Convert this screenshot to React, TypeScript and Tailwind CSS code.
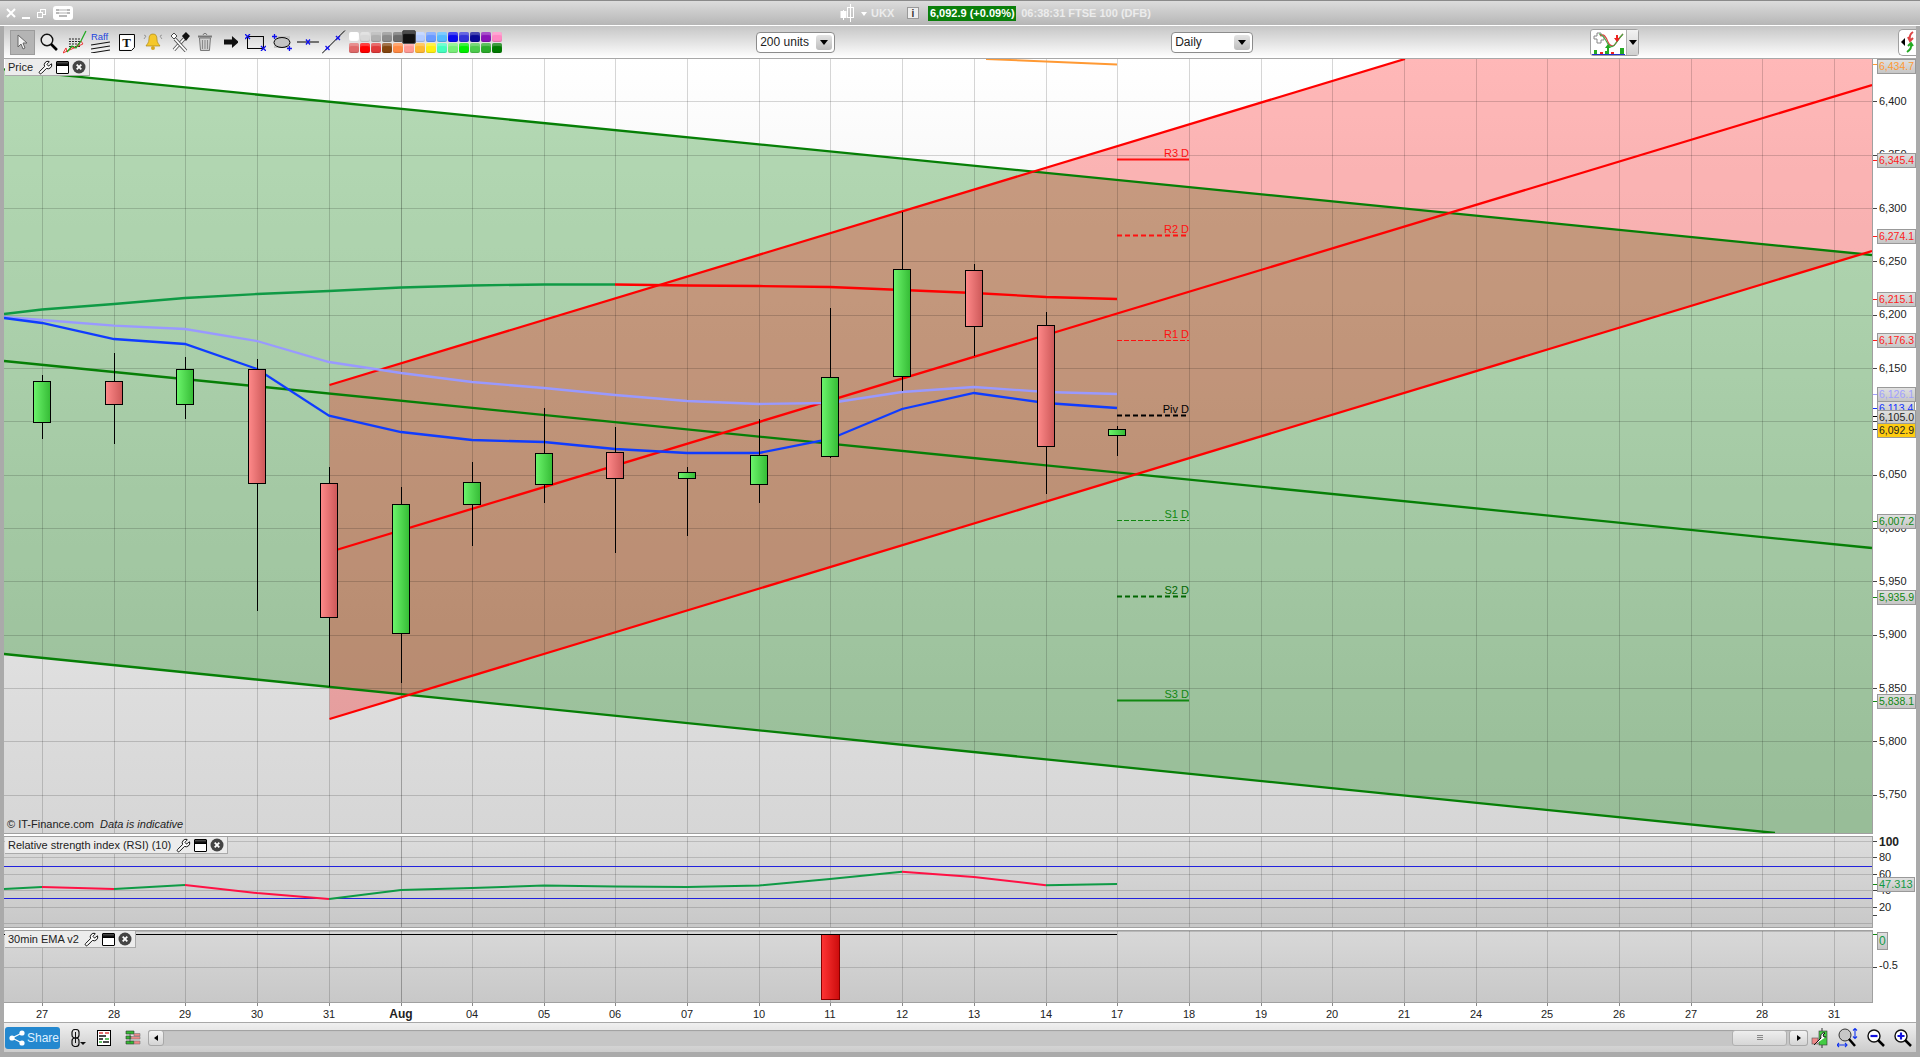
import React from "react";
import { Wrench } from "lucide-react";

// x of every day column, page coordinates
const gridX = [42, 114, 185, 257, 329, 401, 472, 544, 615, 687, 759, 830, 902, 974, 1046, 1117, 1189, 1261, 1332, 1404, 1476, 1547, 1619, 1691, 1762, 1834];
const days = ["27", "28", "29", "30", "31", "Aug", "04", "05", "06", "07", "10", "11", "12", "13", "14", "17", "18", "19", "20", "21", "24", "25", "26", "27", "28", "31"];
const priceY = (p: number) => 315.3 + (6200 - p) * 1.0667;
const gridPrices = [6400, 6350, 6300, 6250, 6200, 6150, 6100, 6050, 6000, 5950, 5900, 5850, 5800, 5750];

type Candle = { x: number; hi: number; top: number; bot: number; lo: number; up: boolean };
const candles: Candle[] = [
  { x: 42, hi: 375, top: 381, bot: 422, lo: 439, up: true },
  { x: 114, hi: 353, top: 381, bot: 404, lo: 444, up: false },
  { x: 185, hi: 357, top: 369, bot: 404, lo: 419, up: true },
  { x: 257, hi: 359, top: 369, bot: 483, lo: 611, up: false },
  { x: 329, hi: 467, top: 483, bot: 617, lo: 687, up: false },
  { x: 401, hi: 487, top: 504, bot: 633, lo: 683, up: true },
  { x: 472, hi: 462, top: 482, bot: 504, lo: 546, up: true },
  { x: 544, hi: 408, top: 453, bot: 484, lo: 503, up: true },
  { x: 615, hi: 427, top: 452, bot: 478, lo: 553, up: false },
  { x: 687, hi: 467, top: 472, bot: 478, lo: 536, up: true },
  { x: 759, hi: 419, top: 455, bot: 484, lo: 503, up: true },
  { x: 830, hi: 308, top: 377, bot: 456, lo: 458, up: true },
  { x: 902, hi: 212, top: 269, bot: 376, lo: 391, up: true },
  { x: 974, hi: 264, top: 270, bot: 326, lo: 356, up: false },
  { x: 1046, hi: 312, top: 325, bot: 446, lo: 494, up: false },
  { x: 1117, hi: 426, top: 429, bot: 435, lo: 456, up: true },
];

const pivots = [
  { y: 159.5, label: "R3 D", color: "#ff1111", width: 2, dash: "" },
  { y: 235.5, label: "R2 D", color: "#ff1111", width: 2, dash: "5 3" },
  { y: 340.5, label: "R1 D", color: "#ff1111", width: 1, dash: "5 2" },
  { y: 415.5, label: "Piv D", color: "#000000", width: 2, dash: "5 3" },
  { y: 520.5, label: "S1 D", color: "#118811", width: 1, dash: "5 2" },
  { y: 596.5, label: "S2 D", color: "#006600", width: 2, dash: "5 3" },
  { y: 700.5, label: "S3 D", color: "#118811", width: 2, dash: "" },
];

const badges = [
  { top: 59, tick: 64, text: "6,434.7", cls: "text-[#ff9933]", tc: "bg-[#ff9933]" },
  { top: 153, tick: 160, text: "6,345.4", cls: "text-[#ff1a1a]", tc: "bg-[#ff1a1a]" },
  { top: 229, tick: 236, text: "6,274.1", cls: "text-[#ff1a1a]", tc: "bg-[#ff1a1a]" },
  { top: 292, tick: 299, text: "6,215.1", cls: "text-[#ff1a1a]", tc: "bg-[#ff1a1a]" },
  { top: 333, tick: 340, text: "6,176.3", cls: "text-[#ff1a1a]", tc: "bg-[#ff1a1a]" },
  { top: 387, tick: 394, text: "6,126.1", cls: "text-[#a0a0ff]", tc: "bg-[#a0a0ff]" },
  { top: 401, tick: 408, text: "6,113.4", cls: "text-[#1133ff]", tc: "bg-[#1133ff]" },
  { top: 410, tick: 416, text: "6,105.0", cls: "text-[#222222]", tc: "bg-black" },
  { top: 423, tick: 429, text: "6,092.9", cls: "text-[#222222] !bg-none !bg-[#ffcc11]", tc: "bg-black" },
  { top: 514, tick: 521, text: "6,007.2", cls: "text-[#118811]", tc: "bg-[#118811]" },
  { top: 590, tick: 597, text: "5,935.9", cls: "text-[#118811]", tc: "bg-[#118811]" },
  { top: 694, tick: 701, text: "5,838.1", cls: "text-[#118811]", tc: "bg-[#118811]" },
];

const swatches = [
  "bg-[#ffffff]", "bg-[#d8d8d8]", "bg-[#b0b0b0]", "bg-[#8c8c8c]", "bg-[#6c6c6c]", "bg-[#111111]", "bg-[#b4ccff]", "bg-[#6a9aff]", "bg-[#55bbff]", "bg-[#0a0aee]", "bg-[#3434d8]", "bg-[#0a0a96]", "bg-[#8a14b8]", "bg-[#ff88c4]",
  "bg-[#e06a6a]", "bg-[#ff0000]", "bg-[#e03a3a]", "bg-[#84450f]", "bg-[#ff8a44]", "bg-[#ff9a94]", "bg-[#ffb833]", "bg-[#ffee11]", "bg-[#44ffc0]", "bg-[#78ee78]", "bg-[#00ee00]", "bg-[#4ccc4c]", "bg-[#2aaa2a]", "bg-[#007a00]",
];

const pts = (a: number[][]) => a.map((p) => p.join(",")).join(" ");

const Gradients = () => (
  <defs>
    <linearGradient id="up">
      <stop offset="0" stopColor="#6cf56c" />
      <stop offset="1" stopColor="#35bb35" />
    </linearGradient>
    <linearGradient id="down">
      <stop offset="0" stopColor="#ff8a8a" />
      <stop offset="1" stopColor="#cc5858" />
    </linearGradient>
    <linearGradient id="bar">
      <stop offset="0" stopColor="#ff3434" />
      <stop offset="1" stopColor="#cc0c0c" />
    </linearGradient>
  </defs>
);

const VGrid = ({ y1, y2 }: { y1: number; y2: number }) => (
  <>
    {gridX.map((x, i) => (
      <line key={i} x1={x + 0.5} x2={x + 0.5} y1={y1} y2={y2} stroke="#000" strokeOpacity={x === 401 ? 0.28 : 0.16} />
    ))}
  </>
);

const PriceChart = () => (
  <svg className="block" width={1868} height={774} viewBox="4 59 1868 774">
    <Gradients />
    <polygon points="4,69.4 1872,255 1872,833 1775,833 4,654" fill="#008000" fillOpacity={0.29} />
    <polygon points="329.5,385 1405,59 1872,59 1872,251 329.5,719" fill="#ff0000" fillOpacity={0.28} />
    <VGrid y1={59} y2={833} />
    {gridPrices.map((p) => (
      <line key={p} x1={4} x2={1872} y1={Math.floor(priceY(p)) + 0.5} y2={Math.floor(priceY(p)) + 0.5} stroke="#000" strokeOpacity={0.16} />
    ))}
    <polyline points="986,59 1117,64.5" fill="none" stroke="#ff9933" strokeWidth={2} />
    <g fill="none" strokeWidth={2.3}>
      <line x1={4} y1={69.4} x2={1872} y2={255} stroke="#067f06" />
      <line x1={4} y1={361} x2={1872} y2={548} stroke="#067f06" />
      <line x1={4} y1={654} x2={1775} y2={833} stroke="#067f06" />
      <line x1={329.5} y1={385} x2={1405} y2={59} stroke="#ff0000" />
      <line x1={329.5} y1={552} x2={1872} y2={85} stroke="#ff0000" />
      <line x1={329.5} y1={719} x2={1872} y2={251} stroke="#ff0000" />
      <polyline stroke="#0f9a45" points={pts([[4, 314], [42, 309.5], [114, 304], [185, 298], [257, 294], [329, 291], [401, 287.5], [472, 285.5], [544, 284.5], [615, 284.5]])} />
      <polyline stroke="#ff0000" points={pts([[615, 284.5], [687, 285.5], [759, 286], [830, 287], [902, 290], [974, 293], [1046, 297], [1117, 299]])} />
      <polyline stroke="#9999ff" points={pts([[4, 317], [42, 320], [114, 325.7], [185, 329], [257, 341], [329, 362], [401, 373], [472, 382], [544, 388], [615, 395], [687, 401], [759, 404], [830, 403], [902, 392], [974, 387], [1046, 392], [1117, 394]])} />
      <polyline stroke="#0f3cff" points={pts([[4, 318], [42, 323], [114, 339], [185, 344], [257, 369], [329, 415.7], [401, 432], [472, 440], [544, 442], [615, 449], [687, 453], [759, 453], [830, 439], [902, 409], [974, 393], [1046, 403], [1117, 408]])} />
    </g>
    {candles.map((c) => (
      <g key={c.x} stroke="#000">
        <line x1={c.x + 0.5} x2={c.x + 0.5} y1={c.hi} y2={c.lo} />
        <rect x={c.x - 8.5} y={c.top + 0.5} width={17} height={c.bot - c.top} fill={c.up ? "url(#up)" : "url(#down)"} />
      </g>
    ))}
    {pivots.map((p) => (
      <g key={p.label}>
        <line x1={1117} x2={1189} y1={p.y} y2={p.y} stroke={p.color} strokeWidth={p.width} strokeDasharray={p.dash} />
        <text x={1189} y={p.y - 3} textAnchor="end" fontSize={11} fill={p.color}>
          {p.label}
        </text>
      </g>
    ))}
  </svg>
);

const rsi: { c: string; p: number[][] }[] = [
  { c: "#0f9a45", p: [[4, 889], [42, 887]] },
  { c: "#ff1144", p: [[42, 887], [114, 889]] },
  { c: "#0f9a45", p: [[114, 889], [185, 885]] },
  { c: "#ff1144", p: [[185, 885], [257, 893], [329, 899]] },
  { c: "#0f9a45", p: [[329, 899], [401, 890], [472, 888], [544, 885.5], [615, 886.5], [687, 887], [759, 885.5], [830, 879], [902, 871.7]] },
  { c: "#ff1144", p: [[902, 871.7], [974, 877], [1046, 885.3]] },
  { c: "#0f9a45", p: [[1046, 885.3], [1117, 884]] },
];

const RsiChart = () => (
  <svg className="block" width={1868} height={90} viewBox="4 837 1868 90">
    <VGrid y1={837} y2={927} />
    {[841.5, 857.5, 874.5, 890.5, 907.5, 923.5].map((y) => (
      <line key={y} x1={4} x2={1872} y1={y} y2={y} stroke="#000" strokeOpacity={0.15} />
    ))}
    <line x1={4} x2={1872} y1={866.5} y2={866.5} stroke="#2222dd" />
    <line x1={4} x2={1872} y1={898.5} y2={898.5} stroke="#2222dd" />
    {rsi.map((s, i) => (
      <polyline key={i} points={pts(s.p)} fill="none" stroke={s.c} strokeWidth={2} />
    ))}
  </svg>
);

const EmaChart = () => (
  <svg className="block" width={1868} height={71} viewBox="4 931 1868 71">
    <Gradients />
    <VGrid y1={931} y2={1002} />
    <line x1={4} x2={1872} y1={931.5} y2={931.5} stroke="#000" strokeOpacity={0.15} />
    <line x1={4} x2={1872} y1={967.5} y2={967.5} stroke="#000" strokeOpacity={0.15} />
    <rect x={821.5} y={934.5} width={18} height={65} fill="url(#bar)" stroke="#880000" />
    <line x1={4} x2={1117} y1={934.5} y2={934.5} stroke="#000" />
  </svg>
);

const WinIcon = () => (
  <span className="block h-[13px] w-[13px] rounded-[1px] border border-black bg-white">
    <span className="block h-[4px] bg-linear-to-b from-[#555555] to-black" />
  </span>
);

const CloseIcon = () => (
  <svg width={14} height={14} viewBox="0 0 14 14">
    <circle cx={7} cy={7} r={6.5} fill="#444" />
    <path d="M4.7 4.7l4.6 4.6M9.3 4.7l-4.6 4.6" stroke="#fff" strokeWidth={1.8} />
  </svg>
);

const Chip = ({ label, className }: { label: string; className: string }) => (
  <div className={`absolute left-px flex h-[17px] items-center gap-[3px] border-r border-b border-[#aaaaaa] bg-[#ececec] pr-[3px] pl-[3px] text-[11px] text-[#222222] ${className}`}>
    <span className="mr-[2px] whitespace-nowrap">{label}</span>
    <Wrench size={15} fill="#fff" stroke="#000" strokeWidth={1.5} />
    <WinIcon />
    <CloseIcon />
  </div>
);

const AxisTick = ({ top, className = "bg-[#444444]" }: { top: number; className?: string }) => (
  <span className={`absolute left-0 h-px w-[4px] ${className}`} style={{ top }} />
);

const AxisLabel = ({ top, text, bold }: { top: number; text: string; bold?: boolean }) => (
  <span className={`absolute left-[6px] leading-[14px] text-[#222222] ${bold ? "text-[12px] font-bold" : "text-[11px]"}`} style={{ top: bold ? top - 7 : top - 8 }}>
    {text}
  </span>
);

const Badge = ({ top, text, className }: { top: number; text: string; className: string }) => (
  <span className={`absolute left-[4px] h-[15px] border border-[#999999] bg-linear-to-b from-[#e0e0e0] to-[#c6c6c6] px-[1px] text-[10.5px] leading-[13px] whitespace-nowrap ${className}`} style={{ top }}>
    {text}
  </span>
);

const Caret = () => <span className="block h-0 w-0 border-x-[4px] border-t-[5px] border-x-transparent border-t-black" />;

const Select = ({ label, width }: { label: string; width: string }) => (
  <div className={`flex h-[21px] items-center justify-between rounded-[4px] border border-[#8c8c8c] bg-white pr-[2px] pl-[3px] text-[12px] text-[#222222] ${width}`}>
    <span>{label}</span>
    <span className="flex h-[15px] w-[16px] items-center justify-center rounded-[3px] bg-linear-to-b from-[#e4e4e4] to-[#bdbdbd]">
      <Caret />
    </span>
  </div>
);

const TitleBar = () => (
  <div className="flex h-[26px] shrink-0 items-center border-t border-b border-t-[#8a8a8a] border-b-white bg-linear-to-b from-[#dcdcdc] to-[#b6b6b6]">
    <svg className="ml-[6px]" width={10} height={10} viewBox="0 0 10 10">
      <path d="M1 1l8 8M9 1l-8 8" stroke="#fff" strokeWidth={2} />
    </svg>
    <span className="mt-[9px] ml-[6px] h-[2px] w-[8px] bg-white" />
    <svg className="ml-[7px]" width={9} height={9} viewBox="0 0 9 9" fill="none" stroke="#fff">
      <rect x={3.5} y={0.5} width={5} height={5} />
      <rect x={0.5} y={3.5} width={5} height={5} fill="#c8c8c8" />
    </svg>
    <span className="ml-[7px] flex h-[14px] w-[20px] flex-col items-center justify-center gap-[1px] rounded-[3px] bg-white">
      <span className="h-[2px] w-[14px] border-x-[3px] border-[#b8b8b8] bg-[#d8d8d8]" />
      <span className="h-[2px] w-[14px] border-x-[3px] border-[#b8b8b8] bg-[#d8d8d8]" />
      <span className="h-[2px] w-[8px] bg-[#b8b8b8]" />
    </span>
    <svg className="ml-[767px]" width={14} height={18} viewBox="0 0 14 18">
      <path d="M3.5 6v10M10.5 0v18" stroke="#fff" />
      <rect x={0.5} y={7} width={6} height={7} fill="#fff" />
      <rect x={7.5} y={3.5} width={6} height={10} fill="none" stroke="#fff" />
    </svg>
    <span className="mt-[1px] ml-[7px] block h-0 w-0 border-x-[3.5px] border-t-[4px] border-x-transparent border-t-white" />
    <span className="ml-[4px] text-[11px] font-bold text-[#ececec]">UKX</span>
    <svg className="ml-[13px]" width={12} height={12} viewBox="0 0 12 12">
      <rect x={0.5} y={0.5} width={11} height={11} fill="#eeeeee" stroke="#999" />
      <text x={6} y={10} textAnchor="middle" fontSize={10} fontWeight={700} fill="#333">i</text>
    </svg>
    <span className="ml-[9px] flex h-[15px] w-[88px] items-center justify-center bg-[#0a7f0a] text-[11px] font-bold whitespace-nowrap text-white">6,092.9 (+0.09%)</span>
    <span className="ml-[5px] text-[11px] font-bold text-[#ececec]">06:38:31 FTSE 100 (DFB)</span>
  </div>
);

const ToolIcons = () => (
  <>
    <span className="ml-[6px] flex h-[25px] w-[25px] items-center justify-center border border-[#9c9c9c] bg-[#b4b4b4]">
      <svg width={11} height={16} viewBox="0 0 11 16">
        <path d="M1 1v12l3-3 2 5 2-1-2-5h4z" fill="#f4f4f4" stroke="#666" />
      </svg>
    </span>
    <svg className="ml-[5px]" width={18} height={18} viewBox="0 0 18 18">
      <circle cx={7} cy={7} r={5.8} fill="#e8e8e8" stroke="#111" strokeWidth={1.4} />
      <path d="M11 11l6 6" stroke="#000" strokeWidth={2.6} />
    </svg>
    <svg className="ml-[5px]" width={24} height={24} viewBox="0 0 24 24">
      <path d="M6 9h12M6 11.5h12M6 14h12M6 16.5h12" stroke="#222" strokeDasharray="2 1" />
      <path d="M0 23l3-5 1 4 5-5 3 1 6-7 2 3z" fill="none" stroke="#ee2222" strokeWidth={0.9} />
      <path d="M4 22l5-6 4 2 5-7 5-10" fill="none" stroke="#22aa22" strokeWidth={1.3} />
    </svg>
    <svg className="ml-[4px]" width={20} height={22} viewBox="0 0 20 22">
      <text x={0} y={9} fontSize={9.5} fill="#2244dd">Raff</text>
      <path d="M0 14l19-3M0 18l19-3M0 22l19-3" stroke="#111" strokeWidth={1.1} />
    </svg>
    <svg className="ml-[8px]" width={16} height={17} viewBox="0 0 16 17">
      <path d="M.5.5h15v13l-3 3H.5z" fill="#fff" stroke="#000" />
      <text x={7.5} y={13} textAnchor="middle" fontSize={13} fontWeight={700} fontFamily="Liberation Serif, serif" fill="#111">T</text>
    </svg>
    <svg className="ml-[8px]" width={20} height={18} viewBox="0 0 20 18">
      <path d="M10 1c3 0 4 2 4 5 0 4 2 5 3 7H3c1-2 3-3 3-7 0-3 1-5 4-5z" fill="#f5c82c" stroke="#a8861a" strokeWidth={0.7} />
      <circle cx={10} cy={15} r={2} fill="#d8a820" />
      <path d="M3 3L1 6M17 3l2 3M1 2l2 1M19 2l-2 1" stroke="#999" />
    </svg>
    <svg className="ml-[7px]" width={20} height={20} viewBox="0 0 20 20">
      <path d="M4 18L14 7" stroke="#555" strokeWidth={3.4} />
      <path d="M4 18L14 7" stroke="#fff" strokeWidth={1.8} />
      <path d="M16 19L5 7" stroke="#555" strokeWidth={3.4} />
      <path d="M16 19L5 7" stroke="#fff" strokeWidth={1.8} />
      <path d="M1 4l3-3 3 3-3 3z" fill="#fff" stroke="#444" />
      <path d="M12 4l4-4 4 4-4 5z" fill="#111" />
    </svg>
    <svg className="ml-[7px]" width={16} height={18} viewBox="0 0 16 18">
      <path d="M1 3.5h14" stroke="#777" strokeWidth={2} />
      <path d="M6 2l1-1.5h2L10 2" fill="none" stroke="#777" />
      <path d="M2.5 5h11l-1 12.5h-9z" fill="#cfcfcf" stroke="#777" />
      <path d="M5.5 7v9M8 7v9M10.5 7v9" stroke="#888" />
    </svg>
    <svg className="ml-[11px]" width={15} height={12} viewBox="0 0 15 12">
      <path d="M0 3.5h8V0l7 6-7 6V8.5H0z" fill="#111" />
    </svg>
    <svg className="ml-[7px]" width={21} height={17} viewBox="0 0 21 17">
      <rect x={2.5} y={2.5} width={16} height={12} fill="none" stroke="#000" />
      <path d="M0 0l5 5M5 0L0 5M16 12l5 5M21 12l-5 5" stroke="#1111ee" strokeWidth={1.3} />
    </svg>
    <svg className="ml-[6px]" width={20} height={17} viewBox="0 0 20 17">
      <rect x={2} y={2} width={16} height={12} fill="#c4c4c4" />
      <ellipse cx={10} cy={8.5} rx={8} ry={5} fill="none" stroke="#000" />
      <path d="M2.5 0v5M0 2.5h5M17.5 12v5M15 14.5h5" stroke="#1111ee" strokeWidth={1.3} />
    </svg>
    <svg className="ml-[5px]" width={22} height={8} viewBox="0 0 22 8">
      <path d="M0 4h22" stroke="#000" />
      <path d="M9 1.5l4 5M13 1.5l-4 5" stroke="#1111ee" strokeWidth={1.3} />
    </svg>
    <svg className="ml-[3px]" width={24} height={24} viewBox="0 0 24 24">
      <path d="M0 23.5L23 .5" stroke="#000" />
      <path d="M3.5 16l4 4M7.5 16l-4 4M14 6l4 4M18 6l-4 4" stroke="#1111ee" strokeWidth={1.3} />
    </svg>
  </>
);

const Swatches = () => (
  <div className="relative ml-[3px] grid w-[153px] grid-cols-[repeat(14,10px)] grid-rows-[10px_10px] gap-x-px gap-y-px">
    {swatches.map((c, i) => (
      <span key={i} className={`rounded-[2px] shadow-[inset_0_-1px_1px_rgba(0,0,0,0.15),inset_0_3px_1px_rgba(255,255,255,0.25)] ${c} ${i === 5 ? "-m-[2px] z-10 border border-[#555555]" : ""}`} />
    ))}
  </div>
);

const Toolbar = () => (
  <div className="mx-[4px] flex h-[33px] shrink-0 items-center border-b border-[#a8a8a8] bg-linear-to-b from-[#c6c6c6] to-white">
    <ToolIcons />
    <Swatches />
    <div className="ml-[254px]">
      <Select label="200 units" width="w-[79px]" />
    </div>
    <div className="ml-[336px]">
      <Select label="Daily" width="w-[82px]" />
    </div>
    <div className="ml-[337px] flex h-[27px] w-[49px] rounded-[3px] border border-[#a0a0a0] bg-white">
      <svg width={35} height={25} viewBox="0 0 35 25">
        <path d="M3 9V6h3V3h4v3h3v4h-3v3H6v-4z" fill="#fff" stroke="#888" />
        <path d="M9 6c4-3 6 1 8 6s6 5 8 1 4-6 7-9" fill="none" stroke="#dd4444" strokeWidth={1.2} />
        <path d="M8 4c4 0 6 5 9 10s6 2 8-1 5-7 7-9" fill="none" stroke="#44aa44" strokeWidth={1.2} />
        <path d="M14 18l3-4 3 4h-2v3h-2v-3z" fill="#22aa22" />
        <path d="M25 5h2v3h2l-3 4-3-4h2z" fill="#ee2222" />
        <path d="M3 24h3v-4H3zM14 24h4v-3h-4zM29 24h4v-6h-4z" fill="#22aa22" />
        <path d="M9 24h3v-2H9zM20 24h3v-2h-3z" fill="#ee2222" />
        <path d="M1 24.5h33" stroke="#2233cc" />
      </svg>
      <span className="flex flex-1 items-center justify-center border-l border-[#b0b0b0] bg-linear-to-b from-[#f2f2f2] to-[#d0d0d0]">
        <Caret />
      </span>
    </div>
    <div className="ml-[259px] flex h-[27px] w-[18px] items-center rounded-l-[5px] border border-r-0 border-[#a0a0a0] bg-white pl-[2px]">
      <span className="h-0 w-0 border-y-[4px] border-r-[4px] border-y-transparent border-r-black" />
      <svg width={10} height={22} viewBox="0 0 10 22">
        <path d="M8 1C5 3 4 5 5 9M3 6l2 4 3-3" fill="none" stroke="#dd4444" strokeWidth={2} />
        <path d="M2 21c3-2 5-4 4-8M3 15l3-3 2 3" fill="none" stroke="#22aa22" strokeWidth={2} />
      </svg>
    </div>
  </div>
);

const PricePanel = () => (
  <div className="flex h-[775px] shrink-0 bg-white">
    <div className="relative h-[775px] w-[1868px] border-b border-[#a0a0a0] bg-linear-to-b from-white to-[#d6d6d6]">
      <PriceChart />
      <Chip label="Price" className="top-0" />
      <p className="absolute bottom-[2px] left-[3px] text-[11px] leading-[14px] whitespace-pre text-[#222222]">
        © IT-Finance.com  <span className="italic">Data is indicative</span>
      </p>
    </div>
    <div className="relative w-[44px] border-l border-[#a0a0a0]">
      {gridPrices.map((p) => (
        <React.Fragment key={p}>
          <AxisTick top={Math.floor(priceY(p)) - 59} />
          <AxisLabel top={priceY(p) - 59} text={p.toLocaleString("en-GB")} />
        </React.Fragment>
      ))}
      {badges.map((b) => (
        <React.Fragment key={b.text}>
          <AxisTick top={b.tick - 59} className={b.tc} />
          <Badge top={b.top - 59} text={b.text} className={b.cls} />
        </React.Fragment>
      ))}
    </div>
  </div>
);

const RsiPanel = () => (
  <div className="mt-[2px] flex h-[92px] shrink-0">
    <div className="relative h-[92px] w-[1868px] border-y border-[#a0a0a0] bg-linear-to-b from-[#dcdcdc] to-[#c8c8c8]">
      <RsiChart />
      <Chip label="Relative strength index (RSI) (10)" className="top-0" />
    </div>
    <div className="relative w-[44px] border-l border-[#a0a0a0]">
      {[[841, "100"], [857, "80"], [874, "60"], [890, "40"], [907, "20"]].map(([y, t]) => (
        <React.Fragment key={t}>
          <AxisTick top={(y as number) - 836} />
          <AxisLabel top={(y as number) - 836 + 1} text={t as string} bold={t === "100"} />
        </React.Fragment>
      ))}
      <AxisTick top={79} />
      <AxisTick top={48} className="bg-[#118811]" />
      <Badge top={41} text="47.313" className="text-[11px] text-[#119944]" />
    </div>
  </div>
);

const EmaPanel = () => (
  <div className="mt-[2px] flex h-[73px] shrink-0">
    <div className="relative h-[73px] w-[1868px] border-y border-[#a0a0a0] bg-linear-to-b from-[#d8d8d8] to-[#c8c8c8]">
      <EmaChart />
      <Chip label="30min EMA v2" className="top-0" />
    </div>
    <div className="relative w-[44px] border-l border-[#a0a0a0]">
      <AxisTick top={4} className="bg-[#118811]" />
      <Badge top={2} text="0" className="!h-[18px] text-[12px] leading-[16px] text-[#119944]" />
      <AxisTick top={37} />
      <AxisLabel top={36} text="-0.5" />
    </div>
  </div>
);

const TimeAxis = () => (
  <div className="relative h-[20px] shrink-0 border-b border-[#a8a8a8]">
    {days.map((d, i) => (
      <React.Fragment key={i}>
        <span className="absolute top-0 h-[3px] w-px bg-[#888888]" style={{ left: gridX[i] - 4 }} />
        <span className={`absolute top-[4px] w-[30px] text-center leading-[14px] text-[#222222] ${d === "Aug" ? "text-[12px] font-bold" : "text-[11px]"}`} style={{ left: gridX[i] - 19 }}>
          {d}
        </span>
      </React.Fragment>
    ))}
  </div>
);

const ScrollButton = ({ dir, width }: { dir: "l" | "r"; width: string }) => (
  <span className={`flex h-[16px] items-center justify-center rounded-[3px] border border-[#a8a8a8] bg-linear-to-b from-[#f4f4f4] to-[#d4d4d4] ${width}`}>
    <span className={`h-0 w-0 border-y-[3.5px] border-y-transparent ${dir === "l" ? "border-r-[4px] border-r-black" : "border-l-[4px] border-l-black"}`} />
  </span>
);

const Magnifier = ({ sign, className }: { sign: "+" | "-"; className: string }) => (
  <svg className={className} width={18} height={18} viewBox="0 0 18 18">
    <circle cx={7} cy={7} r={6} fill="#fff" stroke="#111" strokeWidth={1.4} />
    <path d="M11 11l6 6" stroke="#000" strokeWidth={2.5} />
    <path d={sign === "+" ? "M3.5 7h7M7 3.5v7" : "M3.5 7h7"} stroke="#1111dd" strokeWidth={2.2} />
  </svg>
);

const BottomBar = () => (
  <div className="flex h-[29px] shrink-0 items-center bg-linear-to-b from-[#f0f0f0] to-[#cccccc]">
    <button className="ml-[1px] flex h-[22px] w-[55px] items-center rounded-[3px] bg-[#2488cf] pl-[4px] text-[12px] text-[#dff0ff]">
      <svg width={16} height={16} viewBox="0 0 16 16">
        <path d="M3 8l10-5M3 8l10 5" stroke="#fff" strokeWidth={1.2} />
        <circle cx={3} cy={8} r={2.6} fill="#fff" />
        <circle cx={13} cy={3} r={2.6} fill="#fff" />
        <circle cx={13} cy={13} r={2.6} fill="#fff" />
      </svg>
      <span className="ml-[2px]">Share</span>
    </button>
    <svg className="ml-[11px]" width={15} height={18} viewBox="0 0 15 18">
      <rect x={1} y={0.5} width={7} height={8.5} rx={3} fill="none" stroke="#111" strokeWidth={1.2} />
      <rect x={1} y={9} width={7} height={8.5} rx={3} fill="none" stroke="#111" strokeWidth={1.2} />
      <path d="M4.5 3v11" stroke="#111" />
      <path d="M9 13h6l-3 3z" fill="#111" />
    </svg>
    <svg className="ml-[11px]" width={14} height={16} viewBox="0 0 14 16">
      <rect x={0.5} y={0.5} width={13} height={15} fill="#fff" stroke="#000" />
      <path d="M2 3h4M8 3h4" stroke="#dd4444" strokeWidth={1.5} />
      <path d="M2 6h7M2 9h4M6 12h6" stroke="#111" strokeWidth={1.3} />
      <path d="M8 9h4M2 12h3" stroke="#33aa33" strokeWidth={1.5} />
    </svg>
    <svg className="ml-[14px]" width={16} height={16} viewBox="0 0 16 16">
      <path d="M1 1h8v3H1zM1 6h5v3H1zM1 11h8v3H1zM5 3.5v9" fill="#33bb33" stroke="#333" strokeWidth={0.6} />
      <path d="M9 3.5h6V6H9zM6 6.5h9V9H6zM9 11h6v3H9z" fill="#f08888" stroke="#777" strokeWidth={0.6} />
    </svg>
    <div className="ml-[7px] flex h-[16px] w-[1660px] items-center rounded-[3px] bg-[#c6c6c6] shadow-[inset_0_1px_1px_rgba(0,0,0,0.2)]">
      <ScrollButton dir="l" width="w-[16px]" />
      <span className="ml-[1568px] flex h-[16px] w-[55px] flex-col items-center justify-center gap-px rounded-[3px] border border-[#b0b0b0] bg-linear-to-b from-[#eeeeee] to-[#d6d6d6]">
        <span className="h-px w-[6px] bg-[#888888]" />
        <span className="h-px w-[6px] bg-[#888888]" />
        <span className="h-px w-[6px] bg-[#888888]" />
      </span>
      <ScrollButton dir="r" width="ml-[2px] w-[19px]" />
    </div>
    <svg className="ml-[3px]" width={17} height={20} viewBox="0 0 17 20">
      <path d="M11 0v20" stroke="#333" />
      <rect x={8} y={3} width={8} height={14} fill="#44cc44" stroke="#333" strokeWidth={0.6} />
      <rect x={1} y={10} width={6} height={6} fill="#f08888" stroke="#555" strokeWidth={0.6} />
      <path d="M3 17l7-7c-1-3 1-6 4-5l-2 2 1 2 2 0" fill="#fff" stroke="#111" strokeWidth={1} />
    </svg>
    <svg className="ml-[9px]" width={21} height={20} viewBox="0 0 21 20">
      <circle cx={8} cy={7} r={6} fill="#c8c8c8" stroke="#333" />
      <path d="M12 11l6 7" stroke="#000" strokeWidth={2.5} />
      <path d="M18 0v11M16 2.5L18 .5l2 2M16 8.5l2 2 2-2M0 17h10M2 15l-2 2 2 2M8 15l2 2-2 2" fill="none" stroke="#1133ee" strokeWidth={1.1} />
    </svg>
    <Magnifier sign="-" className="ml-[9px]" />
    <Magnifier sign="+" className="ml-[9px]" />
  </div>
);

export default function App() {
  return (
    <div className="flex h-[1057px] w-[1920px] flex-col overflow-hidden bg-[#aaaaaa] font-['Liberation_Sans',sans-serif]">
      <TitleBar />
      <Toolbar />
      <div className="mx-[4px] flex flex-col bg-white">
        <PricePanel />
        <RsiPanel />
        <EmaPanel />
        <TimeAxis />
        <BottomBar />
      </div>
    </div>
  );
}
